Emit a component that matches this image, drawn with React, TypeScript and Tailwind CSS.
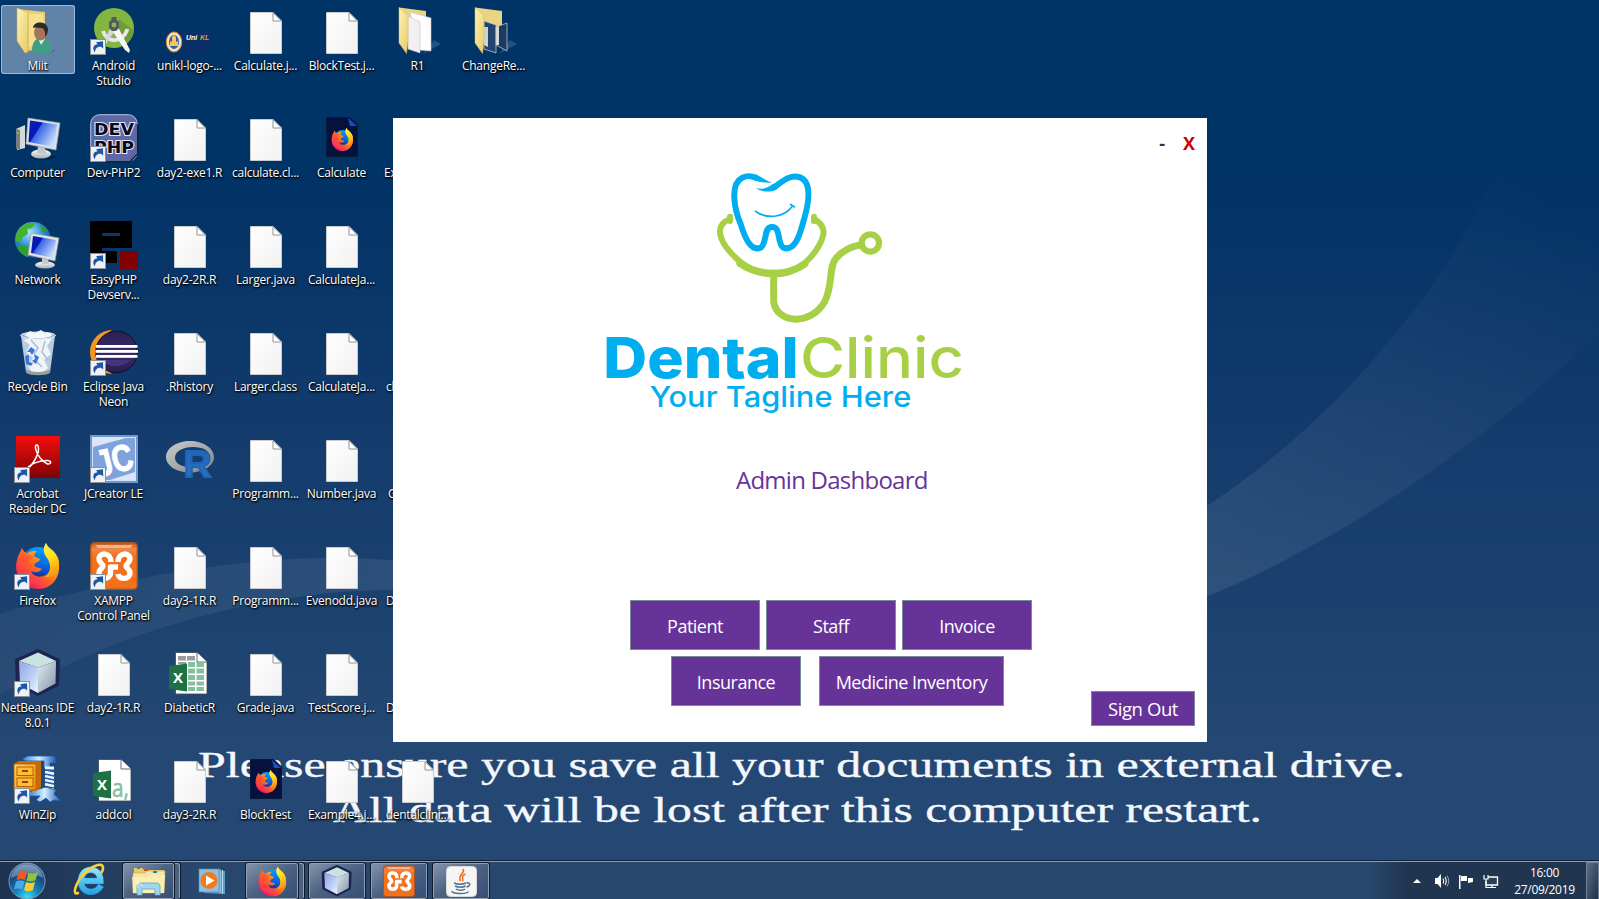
import React from "react";

type IconProps = { size?: number };

function Svg({ size = 48, children }: { size?: number; children: React.ReactNode }) {
  return (
    <svg width={size} height={size} viewBox="0 0 48 48" className="block overflow-visible">
      {children}
    </svg>
  );
}

function Gradients() {
  return (
    <svg width="0" height="0" className="absolute">
      <defs>
        <linearGradient id="folder" x1="0" y1="0" x2="1" y2="1">
          <stop offset="0" stopColor="#fdf3b8" />
          <stop offset="1" stopColor="#e8cb62" />
        </linearGradient>
        <linearGradient id="paper" x1="0" y1="0" x2="1" y2="1">
          <stop offset="0" stopColor="#ffffff" />
          <stop offset="1" stopColor="#f1f1f1" />
        </linearGradient>
        <linearGradient id="screen" x1="0" y1="0" x2="1" y2="0.6">
          <stop offset="0" stopColor="#0a1fae" />
          <stop offset="0.38" stopColor="#0618b8" />
          <stop offset="0.42" stopColor="#3c66e6" />
          <stop offset="1" stopColor="#c4dcff" />
        </linearGradient>
        <linearGradient id="metal" x1="0" y1="0" x2="0" y2="1">
          <stop offset="0" stopColor="#ffffff" />
          <stop offset="1" stopColor="#a7adb3" />
        </linearGradient>
        <radialGradient id="globe" cx="0.4" cy="0.3" r="0.75">
          <stop offset="0" stopColor="#a9e4ff" />
          <stop offset="0.5" stopColor="#2f8fd6" />
          <stop offset="1" stopColor="#0a3c8c" />
        </radialGradient>
        <linearGradient id="acro" x1="0" y1="0" x2="0" y2="1">
          <stop offset="0" stopColor="#f70d0d" />
          <stop offset="1" stopColor="#7c0303" />
        </linearGradient>
        <linearGradient id="fox" x1="0.85" y1="0" x2="0.15" y2="0.85">
          <stop offset="0" stopColor="#fff44f" />
          <stop offset="0.3" stopColor="#ffb21a" />
          <stop offset="0.6" stopColor="#ff6b22" />
          <stop offset="1" stopColor="#f5156c" />
        </linearGradient>
        <linearGradient id="foxGlobe" x1="0.6" y1="0" x2="0.4" y2="1">
          <stop offset="0" stopColor="#00a2ff" />
          <stop offset="0.6" stopColor="#0a5bd8" />
          <stop offset="1" stopColor="#1a1a72" />
        </linearGradient>
        <linearGradient id="foxTail" x1="0" y1="0" x2="0.3" y2="1">
          <stop offset="0" stopColor="#fff35a" />
          <stop offset="0.5" stopColor="#ffdf1c" />
          <stop offset="1" stopColor="#ff9a12" />
        </linearGradient>
        <linearGradient id="xampp" x1="0" y1="0" x2="0" y2="1">
          <stop offset="0" stopColor="#c3571b" />
          <stop offset="0.14" stopColor="#f08748" />
          <stop offset="0.3" stopColor="#f4711c" />
          <stop offset="1" stopColor="#f4711c" />
        </linearGradient>
        <linearGradient id="ringGrey" x1="0" y1="0" x2="1" y2="1">
          <stop offset="0" stopColor="#cbced0" />
          <stop offset="1" stopColor="#7f8388" />
        </linearGradient>
        <linearGradient id="rBlue" x1="0" y1="0" x2="0" y2="1">
          <stop offset="0" stopColor="#1f65b7" />
          <stop offset="1" stopColor="#2a74cc" />
        </linearGradient>
        <linearGradient id="cubeL" x1="0" y1="0" x2="1" y2="1">
          <stop offset="0" stopColor="#8fa6e0" />
          <stop offset="0.55" stopColor="#b9cdf6" />
          <stop offset="1" stopColor="#eef5fc" />
        </linearGradient>
        <linearGradient id="cubeR" x1="0" y1="0" x2="1" y2="1">
          <stop offset="0" stopColor="#dfe9f0" />
          <stop offset="1" stopColor="#8496ab" />
        </linearGradient>
        <linearGradient id="eclipse" x1="0" y1="0" x2="0" y2="1">
          <stop offset="0" stopColor="#2b2050" />
          <stop offset="0.5" stopColor="#37296c" />
          <stop offset="1" stopColor="#2a1d4e" />
        </linearGradient>
        <linearGradient id="ie" gradientUnits="userSpaceOnUse" x1="0" y1="3" x2="0" y2="31">
          <stop offset="0" stopColor="#a5e6fc" />
          <stop offset="0.5" stopColor="#51c3f2" />
          <stop offset="1" stopColor="#2b9be0" />
        </linearGradient>
        <linearGradient id="zip" x1="0" y1="0" x2="1" y2="1">
          <stop offset="0" stopColor="#ffd75e" />
          <stop offset="1" stopColor="#ee8a06" />
        </linearGradient>
        <linearGradient id="clamp" x1="0" y1="0" x2="1" y2="0">
          <stop offset="0" stopColor="#2a86d8" />
          <stop offset="0.5" stopColor="#d5f0ff" />
          <stop offset="1" stopColor="#1c57b0" />
        </linearGradient>
        <radialGradient id="orb" cx="0.5" cy="0.95" r="0.95">
          <stop offset="0" stopColor="#36e0ff" />
          <stop offset="0.35" stopColor="#1481b8" />
          <stop offset="0.7" stopColor="#174a7c" />
          <stop offset="1" stopColor="#5d83a8" />
        </radialGradient>
      </defs>
    </svg>
  );
}

const ShortcutArrow = () => (
  <g>
    <rect x="0.5" y="32.5" width="15" height="15" fill="#eef2f6" stroke="#8e9298" />
    <path d="M5 45.5C1.8 41 3.6 37.4 7.6 37.2L6 35.2L13 34.2L13.2 41.4L11 39.8C7.4 39.6 5 41.6 5 45.5Z" fill="#1c57a5" />
  </g>
);

const FileIcon = () => (
  <Svg>
    <path d="M8.500 5.500H31L39.500 14V46.500H8.500Z" fill="url(#paper)" stroke="#c9cbcd" />
    <path d="M31 5.500V14H39.500" fill="#fff" stroke="#8f969c" />
    <path d="M31.500 6L39 13.500" stroke="#7b8a98" />
  </Svg>
);

const UserFolder = () => (
  <Svg>
    <path d="M3 2L31 5V42L12 44Z" fill="#e9cf78" />
    <path d="M3 1L14 5V45L11 46L3 34Z" fill="url(#folder)" stroke="#c6a94a" strokeWidth=".6" />
    <path d="M15 7L29 7V36L15 40Z" fill="#f6e08f" />
    <ellipse cx="30" cy="44" rx="11" ry="2" fill="#31506f" opacity=".4" />
    <path d="M18 44C18 36 21 31 27 31C34 31 38 36 38.500 45C31 47 24 47 18 44Z" fill="#3f9f84" />
    <path d="M24 31L27 38L31 32Z" fill="#d9f0e6" />
    <ellipse cx="26.500" cy="25.500" rx="6.500" ry="8" fill="#a5775a" />
    <path d="M19 21C19 14 33 13 34 22C34 27 32 29 31 30C32 25 30 22 28 21C24 21 22 20 19 21Z" fill="#2d2a2c" />
  </Svg>
);

const AndroidStudio = () => (
  <Svg>
    <circle cx="24" cy="21" r="20" fill="#82b641" />
    <path d="M29 12L44 24A20 20 0 0 1 34 38.500L24 27Z" fill="#6d9d35" />
    <path d="M13 24C17 37 33 36 37.500 22" fill="none" stroke="#e8e8e8" strokeWidth="4" />
    <path d="M21 20L10 41L12 43L24 25Z" fill="#d7dadb" />
    <path d="M23 25L28 20L40 43L39 46L35 43Z" fill="#f5f5f5" />
    <path d="M21.500 10H26.500V13L29 15V21L26 24H22L19 21V15L21.500 13Z" fill="#57585c" />
    <circle cx="24" cy="18" r="2.400" fill="#8bb94f" />
    <ShortcutArrow />
  </Svg>
);

const UniklLogo = () => (
  <Svg>
    <rect x="1" y="25" width="44" height="21" fill="#0b2f67" />
    <ellipse cx="8" cy="35" rx="7.700" ry="10" fill="#f1e3c6" stroke="#e58a2c" />
    <ellipse cx="8" cy="35" rx="5" ry="7" fill="#2f62a3" />
    <path d="M4 39V34L6 35V30L8 28L10 30V35L12 34V39Z" fill="#f5c65b" />
    <text x="20" y="33" fontFamily="Liberation Sans" fontStyle="italic" fontWeight="700" fontSize="7" fill="#fff">Uni</text>
    <text x="34" y="33" fontFamily="Liberation Sans" fontStyle="italic" fontWeight="700" fontSize="7" fill="#f49a1a">KL</text>
  </Svg>
);

const OpenFolder = ({ dark }: { dark?: boolean }) => (
  <Svg>
    <path d="M29 47L47 37L40 33Z" fill="#8fb4d8" opacity=".25" />
    <path d="M5 0.500L32 4V34H12Z" fill="#e8d483" />
    {dark ? (
      <g stroke="#b9c5d3" strokeWidth=".8">
        <path d="M14 14L26 18V46L14 42Z" fill="#24436d" />
        <path d="M14 20L18 20V40L14 38Z" fill="#cfd3cf" stroke="none" />
        <path d="M26 20L37 16V44L26 38Z" fill="#1d3a63" />
        <path d="M26 20L29 19V38L26 38Z" fill="#d5dad9" stroke="none" />
      </g>
    ) : (
      <g stroke="#c3c3c3" strokeWidth=".6">
        <path d="M16 5L37 11V44L25 43Z" fill="#fff" />
        <path d="M14 9L26 15V46L14 42Z" fill="#f2f0f0" />
      </g>
    )}
    <path d="M5 0.500L14 8V34L12.500 46.500L5 36Z" fill="url(#folder)" stroke="#d3b85c" strokeWidth=".5" />
  </Svg>
);

const Computer = () => (
  <Svg>
    <path d="M2 15L11 11V34L3 36Z" fill="#d5d9dc" />
    <path d="M2 15L6 16V36L2 34Z" fill="#767c82" />
    <rect x="3" y="18" width="2" height="2" fill="#53e02a" />
    <ellipse cx="29" cy="43" rx="13" ry="3" fill="#021f40" opacity=".6" />
    <ellipse cx="27" cy="40" rx="10" ry="4.500" fill="url(#metal)" />
    <path d="M24 32L31 33L32 40L23 39Z" fill="#c3c8cc" />
    <path d="M14 4L46 9L42 36L12 30Z" fill="#dce0e3" stroke="#989fa6" strokeWidth=".7" />
    <path d="M16 6.500L43 10.500L40 33L14.500 28Z" fill="url(#screen)" />
  </Svg>
);

const Network = () => (
  <Svg>
    <circle cx="19" cy="19" r="18" fill="url(#globe)" />
    <path d="M5 8C10 2 18 1 22 2L18 7L13 8L14 13L9 16L6 21L1.500 20C1 15 3 11 5 8Z" fill="#43b42c" />
    <path d="M26 3L34 10L28 11ZM9 24L17 27L19 33L13 36C8 34 4 29 3 25Z" fill="#319f2c" />
    <ellipse cx="31" cy="44" rx="10" ry="3.500" fill="url(#metal)" />
    <path d="M28 37H34L35 43H28Z" fill="#c7cbcf" />
    <path d="M17 12L45 17L41 40L14 34Z" fill="#dfe3e6" stroke="#989fa6" strokeWidth=".7" />
    <path d="M19 15L42 19L39 37L17 32Z" fill="url(#screen)" />
  </Svg>
);

const DevPhp = () => (
  <Svg>
    <rect x=".7" y=".7" width="46.500" height="46.500" rx="9" fill="#5d68a6" stroke="#bcc3e3" strokeWidth="1" />
    <path d="M10 47.500H40L47.500 40V10" stroke="#171c3a" strokeWidth="1.500" fill="none" />
    <g fontFamily="DejaVu Sans" fontWeight="700" fill="#080b16" stroke="#e3e7fb" strokeWidth="2" paintOrder="stroke">
      <text x="4" y="21" fontSize="15" textLength="40" lengthAdjust="spacingAndGlyphs">DEV</text>
      <text x="4" y="38.500" fontSize="15" textLength="40" lengthAdjust="spacingAndGlyphs">PHP</text>
    </g>
    <ShortcutArrow />
  </Svg>
);

const EasyPhp = () => (
  <Svg>
    <path d="M0 0H42V27H12V30H27V42H0Z" fill="#000" />
    <path d="M12 12H30V15H12Z" fill="#0a3766" />
    <rect x="30" y="30" width="18" height="18" fill="#820000" />
    <ShortcutArrow />
  </Svg>
);

const RecycleBin = () => (
  <Svg>
    <g transform="translate(0 2)">
      <path d="M7 6L12 42C16 45 32 45 36 42L41 6Z" fill="#c9d9e6" opacity=".92" />
      <path d="M9 10L16 15L12 22L19 28L14 36L18 42L28 43L34 38L30 30L37 24L33 16L38 9L24 7Z" fill="#eef4f9" />
      <path d="M17 10L24 18L20 24M31 11L28 22L34 30M22 31L28 37" stroke="#a9bfd2" strokeWidth="1.500" fill="none" />
      <ellipse cx="24" cy="5.500" rx="17.500" ry="3.500" fill="#9eb4c4" stroke="#e6edf2" />
      <path d="M10 5L16 1L21 3L27 0L31 3L37 3L38 6L30 8H16Z" fill="#f4f8fb" />
      <path d="M12 39C17 43 31 43 36.500 39L36 43C31 46 17 46 12.500 43Z" fill="#98a09f" />
      <g fill="#3677d6">
        <path d="M13 22L17 17L21 20L18 25L16 22Z" />
        <path d="M11 26L15 25L15 32L19 33L17 36L12 34Z" />
        <path d="M20 24L25 27L22 34L18 31L21 29Z" />
      </g>
    </g>
  </Svg>
);

const Eclipse = () => (
  <Svg>
    <g transform="translate(0 2)">
      <path d="M22 0A22 22 0 0 0 22 44A26 26 0 0 1 22 0Z" fill="#f7941e" />
      <circle cx="26.500" cy="22" r="20.800" fill="url(#eclipse)" stroke="#0f1024" />
      <path d="M12 30C18 38 34 38 40 30Z" fill="#44347c" />
      <g fill="#fff">
        <rect x="6" y="15" width="41.500" height="2.800" />
        <rect x="5.500" y="20" width="42.500" height="2.800" />
        <rect x="6" y="25" width="41.500" height="2.800" />
      </g>
    </g>
    <ShortcutArrow />
  </Svg>
);

const Acrobat = () => (
  <Svg>
    <rect x="2" y="1" width="44" height="42" fill="url(#acro)" />
    <path d="M13 34C18 31 25 20 24.500 13C24 8.500 21 9 21.500 13.500C22.500 20 29 27 33.500 29C37.500 29.500 38 25.500 33 25.500C26 25.500 15 29 13 34Z" fill="none" stroke="#fff" strokeWidth="1.500" />
    <ShortcutArrow />
  </Svg>
);

const JCreator = () => (
  <Svg>
    <rect width="48" height="48" fill="#6f96d2" />
    <rect x="2.500" y="2.500" width="43" height="43" fill="#7fa2da" stroke="#d5e2f7" />
    <path d="M3 3H36L3 12ZM45 26V45H20L45 37Z" fill="#dbe7f8" />
    <text x="6" y="38" transform="rotate(-14 24 26)" fontFamily="Liberation Sans" fontWeight="700" fontSize="37" textLength="37" lengthAdjust="spacingAndGlyphs" fill="#fff" stroke="#fff" strokeWidth="1.200">JC</text>
    <ShortcutArrow />
  </Svg>
);

const RIcon = () => (
  <Svg>
    <path fillRule="evenodd" d="M24 6C37 6 48 13 48 22C48 31 37 37.500 24 37.500C11 37.500 0 31 0 22C0 13 11 6 24 6ZM27 12C17 12 9 16 9 23C9 29 17 32.500 27 32.500C37 32.500 44 29 44 22C44 16 37 12 27 12Z" fill="url(#ringGrey)" />
    <text x="17.500" y="41.500" fontFamily="Liberation Sans" fontWeight="700" fontSize="36" textLength="28" lengthAdjust="spacingAndGlyphs" fill="url(#rBlue)" stroke="#1f65b7" strokeWidth="1.800">R</text>
  </Svg>
);

const FoxShape = () => (
  <g transform="translate(0 1)">
    <circle cx="24" cy="21" r="17" fill="url(#foxGlobe)" />
    <path d="M8 5C9 8 10.500 9 13 10.500C16 8 20 7 23 8.500C20.500 10 20 12 20.500 13.500L26 16C25.500 19.500 20.500 19 20.500 22.500C21 25 25 24 28 26C24 31 19 29 17 28C20 36 32 35 36 28C39 20 36 14 31 10C29.500 6 31 3 32 0C34 5 39 6 42 12C50 27 42 46 24 46C8 46 -1 31 3 17C4 12 6 10 8 5Z" fill="url(#fox)" />
    <path d="M32 0C28 6 30 11 33 15C37 21 38 28 31 34C37 35 43 31 45 24C46 15 42 11 38 7C35 5 33 4 32 0Z" fill="url(#foxTail)" />
    <path d="M8 6C9 10 12 12 20 13C17 17 13 20 12 25C12 34 18 39 28 38C20 44 7 40 4 28C3 20 6 15 8 6Z" fill="#ff4b37" opacity=".55" />
  </g>
);

const Firefox = ({ size = 48, shortcut }: IconProps & { shortcut?: boolean }) => (
  <Svg size={size}>
    <FoxShape />
    {shortcut && <ShortcutArrow />}
  </Svg>
);

const FirefoxDoc = () => (
  <Svg>
    <path d="M8.500 3.500H32L39.500 11V42.500H8.500Z" fill="#07123c" stroke="#061a3a" />
    <path d="M30 4L39 12H32Z" fill="#1451d0" />
    <g transform="translate(12.500 13.500) scale(.5)">
      <FoxShape />
    </g>
  </Svg>
);

const Xampp = ({ size = 48, shortcut }: IconProps & { shortcut?: boolean }) => (
  <Svg size={size}>
    <rect x=".7" y=".7" width="46.600" height="46.600" rx="4" fill="url(#xampp)" stroke="#a95522" strokeWidth="1.400" />
    <path d="M5 3H43L40 6H8Z" fill="#fbd2b4" opacity=".7" />
    <g fill="none" stroke="#fff" strokeWidth="5.400" strokeLinejoin="round">
      <path d="M21 20C21 10 9 10 9 17C9 21 13 21.500 13 24C13 26.500 9 27 9 31C9 38 20.500 38 20.500 31V25H28" />
      <path d="M28 20C28 10 40 10 40 17C40 21 36 21.500 36 24C36 26.500 40 27 40 31C40 38 28.500 38 28 32" />
    </g>
    {shortcut && <ShortcutArrow />}
  </Svg>
);

const NetBeans = ({ size = 48, shortcut }: IconProps & { shortcut?: boolean }) => (
  <Svg size={size}>
    <path d="M24 1.500L44.500 11L43.500 35.500L24 45.500L3.500 35.500L2.500 11Z" fill="#1e2452" stroke="#1e2452" strokeWidth="3" strokeLinejoin="round" />
    <path d="M24 3.500L42 12L24 18.500L5 12Z" fill="#c9e3e0" />
    <path d="M5 12L24 18.500V44L6 34.500Z" fill="url(#cubeL)" />
    <path d="M42 12L24 18.500V44L41.500 34.500Z" fill="url(#cubeR)" />
    {shortcut && <ShortcutArrow />}
  </Svg>
);

const ExcelBook = () => (
  <g>
    <path d="M3 17L21 14.500V42.500L3 40Z" fill="#1e7145" />
    <text x="12" y="33.500" textAnchor="middle" fontFamily="Open Sans" fontWeight="700" fontSize="15" fill="#fff">X</text>
  </g>
);

const ExcelSheet = () => (
  <Svg>
    <path d="M9.500 3.500H31L41 13V45H9.500Z" fill="#fff" stroke="#3b4652" strokeWidth=".8" />
    <path d="M31 3.500V13H41" fill="#fff" stroke="#3b4652" strokeWidth=".8" />
    <path d="M12 7H29V11.500H12ZM12 13H20V15H12Z" fill="#9b9b9b" />
    <path d="M22 13H29V18H22ZM22 19.500H29V24.500H22ZM22 26H29V31H22ZM22 32.500H29V36.500H22ZM22 38H29V42H22ZM30.500 13H38V18H30.500ZM30.500 19.500H38V24.500H30.500ZM30.500 26H38V31H30.500ZM30.500 32.500H38V36.500H30.500ZM30.500 38H38V42H30.500Z" fill="#86bfa0" />
    <path d="M20.500 7V11.500" stroke="#fff" />
    <ExcelBook />
  </Svg>
);

const ExcelCsv = () => (
  <Svg>
    <path d="M8.500 3.500H31L41 13V45H8.500Z" fill="#fff" stroke="#3b4652" strokeWidth=".8" />
    <path d="M31 3.500V13H41" fill="#fff" stroke="#3b4652" strokeWidth=".8" />
    <text x="22" y="41" fontFamily="Open Sans" fontSize="26" textLength="17" lengthAdjust="spacingAndGlyphs" fill="#86bfa0" stroke="#86bfa0" strokeWidth=".6">a,</text>
    <ExcelBook />
  </Svg>
);

const WinZip = () => (
  <Svg>
    <path d="M8 3L14 0H40L42 3V7H36V12H30V5H12Z" fill="url(#clamp)" stroke="#1b5cae" strokeWidth=".8" />
    <path d="M31 12L40 12M31 16L40 18M31 20L40 22M31 24L40 26M31 28L40 30M31 33L40 34" stroke="#e9f7ff" strokeWidth="3" />
    <path d="M31 14L40 15M31 18L40 20M31 22L40 24M31 26L40 28" stroke="#2b62b3" strokeWidth="1.500" />
    <path d="M14 36L32 31L42 34L40 38L47 45L40 44L36 46L32 42L26 46L22 44L26 40H14Z" fill="url(#clamp)" stroke="#1b5cae" strokeWidth=".8" />
    <path d="M0 8L5 5H27V31L22 35H0Z" fill="#c96a06" />
    <rect x="0" y="8" width="22" height="26" fill="url(#zip)" stroke="#b75c04" strokeWidth=".8" />
    <g fill="#ffbd32" stroke="#b75c04">
      <rect x="3" y="11" width="16" height="8.500" />
      <rect x="3" y="22" width="16" height="8.500" />
    </g>
    <path d="M8 15H14M8 26H14" stroke="#8e4502" strokeWidth="2" />
    <ShortcutArrow />
  </Svg>
);

type Item = { icon?: React.ReactNode; label?: string[]; selected?: boolean; cut?: string };

const file = (name: string): Item => ({ icon: <FileIcon />, label: [name] });

const columns: Item[][] = [
  [
    { icon: <UserFolder />, label: ["Miit"], selected: true },
    { icon: <Computer />, label: ["Computer"] },
    { icon: <Network />, label: ["Network"] },
    { icon: <RecycleBin />, label: ["Recycle Bin"] },
    { icon: <Acrobat />, label: ["Acrobat", "Reader DC"] },
    { icon: <Firefox shortcut />, label: ["Firefox"] },
    { icon: <NetBeans shortcut />, label: ["NetBeans IDE", "8.0.1"] },
    { icon: <WinZip />, label: ["WinZip"] },
  ],
  [
    { icon: <AndroidStudio />, label: ["Android", "Studio"] },
    { icon: <DevPhp />, label: ["Dev-PHP2"] },
    { icon: <EasyPhp />, label: ["EasyPHP", "Devserv..."] },
    { icon: <Eclipse />, label: ["Eclipse Java", "Neon"] },
    { icon: <JCreator />, label: ["JCreator LE"] },
    { icon: <Xampp shortcut />, label: ["XAMPP", "Control Panel"] },
    file("day2-1R.R"),
    { icon: <ExcelCsv />, label: ["addcol"] },
  ],
  [
    { icon: <UniklLogo />, label: ["unikl-logo-..."] },
    file("day2-exe1.R"),
    file("day2-2R.R"),
    file(".Rhistory"),
    { icon: <RIcon /> },
    file("day3-1R.R"),
    { icon: <ExcelSheet />, label: ["DiabeticR"] },
    file("day3-2R.R"),
  ],
  [
    file("Calculate.j..."),
    file("calculate.cl..."),
    file("Larger.java"),
    file("Larger.class"),
    file("Programm..."),
    file("Programm..."),
    file("Grade.java"),
    { icon: <FirefoxDoc />, label: ["BlockTest"] },
  ],
  [
    file("BlockTest.j..."),
    { icon: <FirefoxDoc />, label: ["Calculate"] },
    file("CalculateJa..."),
    file("CalculateJa..."),
    file("Number.java"),
    file("Evenodd.java"),
    file("TestScore.j..."),
    file("Example4.j..."),
  ],
  [
    { icon: <OpenFolder />, label: ["R1"] },
    { label: ["Ex"], cut: "pl-[3px]" },
    {},
    { label: ["cl"], cut: "pl-[5px]" },
    { label: ["G"], cut: "pl-[7px]" },
    { label: ["D"], cut: "pl-[5px]" },
    { label: ["D"], cut: "pl-[5px]" },
    file("dentalclini..."),
  ],
  [{ icon: <OpenFolder dark />, label: ["ChangeRe..."] }],
];

function DesktopItem({ icon, label, selected, cut }: Item) {
  return (
    <div className="h-[107px] w-[76px] pt-[5px]">
      <div
        className={
          selected
            ? "mx-px h-[69px] rounded-[3px] bg-[#6283a8] pt-px shadow-[inset_0_0_0_1px_#9bb9da]"
            : "mx-px h-[69px] pt-px"
        }
      >
        <div className="mx-auto size-12 pt-px">{icon}</div>
        <div
          className={`pt-1 text-[12px] leading-[15px] tracking-[-0.24px] whitespace-nowrap text-white [text-shadow:1px_1px_2px_#000,0_1px_2px_#000] ${cut ? "text-left" : "-mr-[7px] -ml-2 text-center"} ${cut ?? ""}`}
        >
          {label?.map((line) => (
            <div key={line}>{line}</div>
          ))}
        </div>
      </div>
    </div>
  );
}

function Wallpaper() {
  return (
    <svg width="1599" height="899" viewBox="0 0 1599 899" className="absolute inset-0">
      <defs>
        <linearGradient id="sky" x1="0" y1="0" x2="0" y2="1">
          <stop offset="0" stopColor="#003366" />
          <stop offset="0.18" stopColor="#003366" />
          <stop offset="0.35" stopColor="#0b3769" />
          <stop offset="0.5" stopColor="#143c6d" />
          <stop offset="0.68" stopColor="#1b426f" />
          <stop offset="0.82" stopColor="#254773" />
          <stop offset="1" stopColor="#254775" />
        </linearGradient>
        <linearGradient id="sweepR" gradientUnits="userSpaceOnUse" x1="1200" y1="560" x2="1550" y2="190">
          <stop offset="0" stopColor="#fff" stopOpacity=".085" />
          <stop offset="1" stopColor="#fff" stopOpacity="0" />
        </linearGradient>
        <linearGradient id="sweepL" gradientUnits="userSpaceOnUse" x1="0" y1="0" x2="400" y2="0">
          <stop offset="0" stopColor="#fff" stopOpacity=".04" />
          <stop offset="1" stopColor="#fff" stopOpacity=".08" />
        </linearGradient>
      </defs>
      <rect width="1599" height="899" fill="url(#sky)" />
      <path d="M1100 570C1250 490 1340 410 1427 293C1460 248 1480 205 1500 160L1599 160V335C1500 425 1400 500 1300 552C1230 590 1180 608 1100 635Z" fill="url(#sweepR)" />
      <path d="M0 614C90 585 230 557 330 558C360 558 380 559 400 561V590C290 588 160 620 67 665C40 676 20 685 0 693Z" fill="url(#sweepL)" />
      <g fill="#f4f7fb" stroke="#f4f7fb" strokeWidth=".35" fontFamily="Liberation Serif, serif" fontSize="35.500">
        <text x="198" y="777" textLength="1207" lengthAdjust="spacingAndGlyphs">Please ensure you save all your documents in external drive.</text>
        <text x="333" y="821.500" textLength="929" lengthAdjust="spacingAndGlyphs">All data will be lost after this computer restart.</text>
      </g>
    </svg>
  );
}

function ClinicLogo() {
  return (
    <svg width="400" height="280" viewBox="0 0 1200 840" className="block">
      <g fill="none" stroke="#a8d046" strokeLinecap="round">
        <path d="M451 207C408 222 416 258 436 288C520 400 640 400 709 300C742 250 735 225 702 207" strokeWidth="18" />
        <path d="M450 200V213M702 200V213" strokeWidth="18" />
        <path d="M480 340C540 380 620 380 674 342" strokeWidth="22" />
        <path d="M581 370V455C590 520 690 530 734 455C760 405 745 350 768 325C785 305 810 290 840 285" strokeWidth="21" />
        <circle cx="871" cy="279" r="26" strokeWidth="19" />
      </g>
      <g fill="none" stroke="#00aeef">
        <path d="M530 84C508 75 498 78 487 83C446 104 466 185 482 222C494 262 512 305 542 293C562 280 550 230 576 231C604 230 590 280 610 293C644 306 660 252 668 222C690 152 696 96 660 82C628 72 606 96 582 112" strokeWidth="18" />
        <path d="M527 73C545 82 560 92 576 98C556 99 540 97 522 91ZM528 115C548 119 562 115 578 102L590 119C568 128 545 126 528 115Z" fill="#00aeef" stroke="none" />
        <path d="M525 183C560 208 610 205 638 168" strokeWidth="5" />
        <path d="M630 162L645 172" strokeWidth="5" />
      </g>
      <g fontFamily="Inter, sans-serif">
        <text x="70" y="684" fontSize="169" fontWeight="800" textLength="586" lengthAdjust="spacingAndGlyphs" fill="#00aeef">Dental</text>
        <text x="660" y="684" fontSize="169" fontWeight="500" textLength="492" lengthAdjust="spacingAndGlyphs" fill="#a8d046">Clinic</text>
        <text x="209" y="770" fontSize="86" fontWeight="500" textLength="785" lengthAdjust="spacingAndGlyphs" fill="#00aeef">Your Tagline Here</text>
      </g>
    </svg>
  );
}

function PurpleButton({ className, children }: { className: string; children: React.ReactNode }) {
  return (
    <button className={`flex items-center justify-center border border-[#7a8a99] bg-[#663399] leading-none text-white ${className}`}>
      {children}
    </button>
  );
}

function AdminWindow() {
  return (
    <main className="absolute top-[118px] left-[393px] flex h-[624px] w-[814px] flex-col bg-white">
      <header className="flex h-8 items-end justify-end gap-[18px] pr-3 text-[18px] leading-none font-bold">
        <span className="translate-y-[2px] text-[#333]">-</span>
        <span className="translate-y-[2px] text-[#cc0000]">X</span>
      </header>
      <div className="ml-[187px]">
        <ClinicLogo />
      </div>
      <h1 className="mt-[34px] ml-[343px] text-[24px] leading-8 tracking-[-0.75px] text-[#663399]">Admin Dashboard</h1>
      <div className="mt-[104px] ml-[237px] flex gap-1.5 text-[18px] tracking-[-0.5px]">
        <PurpleButton className="h-[50px] w-[130px] pt-0.5">Patient</PurpleButton>
        <PurpleButton className="h-[50px] w-[130px] pt-0.5">Staff</PurpleButton>
        <PurpleButton className="h-[50px] w-[130px] pt-0.5">Invoice</PurpleButton>
      </div>
      <div className="mt-1.5 ml-[278px] flex gap-[18px] text-[18px] tracking-[-0.5px]">
        <PurpleButton className="h-[50px] w-[130px] pt-0.5">Insurance</PurpleButton>
        <PurpleButton className="h-[50px] w-[185px] pt-0.5">Medicine Inventory</PurpleButton>
      </div>
      <div className="-mt-[15px] flex justify-end pr-3 text-[18.5px] tracking-[-0.4px]">
        <PurpleButton className="h-[35px] w-[104px] pt-px">Sign Out</PurpleButton>
      </div>
    </main>
  );
}

const TaskButton = ({ className, children }: { className: string; children: React.ReactNode }) => (
  <div className={`flex h-[38px] items-center justify-center rounded-[3px] border border-[#0d1a2c] bg-linear-to-br from-[#8795ab] via-[#4b6182] to-[#344e74] shadow-[inset_0_0_0_1px_#8fa0b8] ${className}`}>
    {children}
  </div>
);

const StackEdge = () => (
  <div className="h-[38px] w-1.5 rounded-r-[3px] border border-l-0 border-[#0d1a2c] bg-[#4c617f] shadow-[inset_-1px_1px_0_0_#8fa0b8]" />
);

const StartOrb = () => (
  <svg width="38" height="38" viewBox="0 0 38 38">
    <circle cx="19" cy="19" r="18" fill="url(#orb)" stroke="#7f9ab8" />
    <path d="M3 16C5 6 12 2.500 19 2.500S33 6 35 16C25 11 12 12 3 16Z" fill="#fff" opacity=".28" />
    <path d="M11 10C14 8 16 8.500 19 10L17 18C14 16.500 12 16.500 8.500 18Z" fill="#ea5a23" />
    <path d="M20.500 10.500C23 12 26 12 30 10L27.500 18C24 20 21 19.500 18.500 18.500Z" fill="#8fc43c" />
    <path d="M8 19.500C11 18 13.500 18 16.500 19.500L14.500 27.500C12 26 9.500 26 6 27.500Z" fill="#4aa8e8" />
    <path d="M18 20C21 21.500 24 21.500 27 19.500L25 28C22 30 18.500 29.500 16 28Z" fill="#fccb2e" />
  </svg>
);

const InternetExplorer = () => (
  <svg width="32" height="32" viewBox="0 0 32 32" className="overflow-visible">
    <path d="M8 17H26.500C26.500 2 7 2 7 17C7 30 22 31 27 21.500" fill="none" stroke="#1f7fc0" strokeWidth="6.600" />
    <path d="M8 17H26.500C26.500 2 7 2 7 17C7 30 22 31 27 21.500" fill="none" stroke="url(#ie)" strokeWidth="5.600" />
    <path d="M4 29C-2 32 1 20 9 11C17 2 28 -2 29 3C29.500 5 28.500 7 27.500 8.500" fill="none" stroke="#f8d13a" strokeWidth="2.600" strokeLinecap="round" />
  </svg>
);

const Explorer = () => (
  <svg width="34" height="30" viewBox="0 0 34 30" className="overflow-visible">
    <path d="M2 2H10L12 4H32V26H1Z" fill="#e5c96b" />
    <path d="M1 7H13L15 5H33L32 27H1Z" fill="#f7e7a4" stroke="#c9ac56" strokeWidth=".6" />
    <rect x="5" y="1" width="3" height="2" fill="#18b51c" />
    <rect x="12" y="3" width="4" height="2" fill="#e24328" />
    <rect x="21" y="5" width="4" height="2" fill="#2a78d8" />
    <path d="M0 11H14L16 9H33L32 27H1Z" fill="#fbefb6" opacity=".85" />
    <path d="M5 29V21C5 18 7 17 9 17H24C27 17 28 18 28 21V29H23V23H10V29Z" fill="#9ed6ee" stroke="#5da6cd" strokeWidth=".8" />
    <path d="M6 12V22M3 15L11 20" stroke="#fff" strokeWidth=".8" opacity=".8" />
  </svg>
);

const MediaPlayer = () => (
  <svg width="28" height="28" viewBox="0 0 28 28">
    <path d="M6 2L27 4V27L6 26Z" fill="#5b9cc8" />
    <path d="M22 2V26M24.500 3V27" stroke="#b6dcf2" />
    <rect x="1" y="2" width="20" height="23" fill="#8fbfe0" stroke="#5687ad" strokeWidth=".7" />
    <circle cx="11" cy="13.500" r="8.500" fill="#f07a1c" />
    <path d="M8 8.500L16.500 13.500L8 18.500Z" fill="#fff" />
  </svg>
);

const JavaCup = () => (
  <svg width="31" height="31" viewBox="0 0 31 31">
    <rect x=".5" y=".5" width="30" height="30" rx="4" fill="#f5f5f3" stroke="#d7d9da" />
    <path d="M17 3C20 7 11 9 14.500 15M19.500 8C14 10.500 18 12 16.500 15.500" fill="none" stroke="#e8702a" strokeWidth="1.600" />
    <g fill="none" stroke="#4d7392" strokeWidth="1.500">
      <path d="M8 17C11 18.500 17 18.500 20 17M9 20C12 21.500 17 21.500 19.500 20M10 23C12 24.500 17 24.500 19 23M20.500 17C25 16 24.500 20 20.500 21M6 25C5 28 21 28.500 22.500 25.500" />
    </g>
  </svg>
);

function Taskbar() {
  return (
    <footer className="absolute inset-x-0 bottom-0 flex h-[39px] border-t border-[#0f2138] bg-linear-to-r from-[#1d3350] via-[#29476c] via-12% to-[#29476c]">
      <div className="flex w-full border-t border-[#8a9db6]">
        <div className="flex w-[122px] pl-2">
          <StartOrb />
          <div className="ml-7 pt-0.5">
            <InternetExplorer />
          </div>
        </div>
        <TaskButton className="w-[53px]"><Explorer /></TaskButton>
        <StackEdge />
        <div className="flex w-[64px] justify-center pt-[5px] pr-0.5"><MediaPlayer /></div>
        <TaskButton className="w-[54px]"><Firefox size={31} /></TaskButton>
        <StackEdge />
        <TaskButton className="ml-[3px] w-[58px]"><NetBeans size={32} /></TaskButton>
        <TaskButton className="ml-1 w-[58px]"><Xampp size={32} /></TaskButton>
        <TaskButton className="ml-1 w-[58px]"><JavaCup /></TaskButton>
        <div className="ml-auto flex bg-linear-to-r from-transparent to-[#20354f] to-[35px]">
          <svg width="120" height="38" viewBox="-18 0 120 38" className="ml-2.5">
            <path d="M14 21L18 17L22 21Z" fill="#fff" />
            <g fill="#fff">
              <path d="M36 16H38.500L42 12V26L38.500 22H36Z" />
              <path d="M60 13H61.500V27H60ZM62 14H68V19H62ZM69 16H74V20L69 21Z" />
            </g>
            <path d="M44 16.500Q45.500 19 44 21.500M46 15Q48.500 19 46 23" fill="none" stroke="#fff" strokeWidth="1.100" />
            <path d="M48 13.500Q51.500 19 48 24.500" fill="none" stroke="#93a3b6" />
            <path d="M89 15H98.500V23H87V19" fill="#2b3e56" stroke="#fff" strokeWidth="1.300" />
            <path d="M85 13V17H89V13M87 17V25.500H97M93 23V26" fill="none" stroke="#fff" strokeWidth="1.200" />
          </svg>
          <div className="w-[85px] pt-0.5 pl-0.5 text-center text-[12px] leading-[17px] tracking-[-0.32px] text-white">
            <div>16:00</div>
            <div>27/09/2019</div>
          </div>
          <div className="h-[38px] w-[13px] border border-[#6f8198] bg-linear-to-br from-[#5d6f86] to-[#1c3049]" />
        </div>
      </div>
    </footer>
  );
}

export default function App() {
  return (
    <div className="relative h-[899px] w-[1599px] overflow-hidden bg-[#003366] font-['Open_Sans','Noto_Sans',sans-serif]">
      <Gradients />
      <Wallpaper />
      <div className="relative flex">
        {columns.map((items, i) => (
          <div key={i} className="flex w-[76px] flex-col">
            {items.map((item, j) => (
              <DesktopItem key={j} {...item} />
            ))}
          </div>
        ))}
      </div>
      <AdminWindow />
      <Taskbar />
    </div>
  );
}
